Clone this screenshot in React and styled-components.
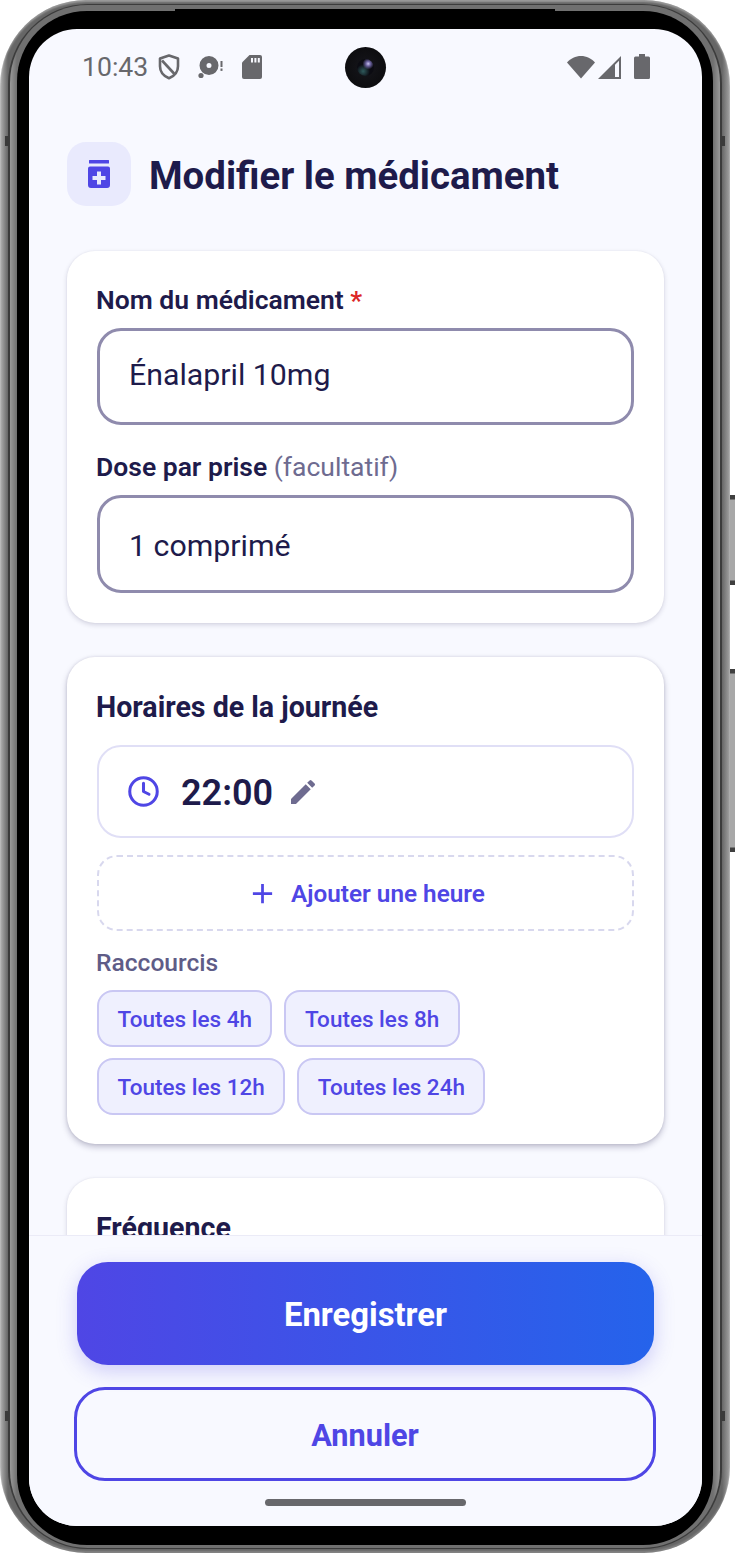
import React from "react";
import styled, { createGlobalStyle } from "styled-components";
import { Clock } from "lucide-react";
import { MdAdd, MdEdit } from "react-icons/md";

const INK = "#1e1b4b";
const INDIGO = "#4f46e5";
const STATUS_GREY = "#68686c";

const GlobalStyle = createGlobalStyle`
  html, body {
    margin: 0;
    background: #fff;
  }
  * {
    box-sizing: border-box;
  }
  body {
    font-family: Roboto, "Noto Sans", sans-serif;
    color: ${INK};
  }
`;

const Stage = styled.div`
  position: relative;
  width: 735px;
  height: 1553px;
  overflow: hidden;
`;

const SideKey = styled.div`
  position: absolute;
  left: 729px;
  top: ${(p) => p.$top}px;
  width: 6px;
  height: ${(p) => p.$height}px;
  background: linear-gradient(
    180deg,
    #3f3f3f 0,
    #3f3f3f 4px,
    #a8a8a8 5px,
    #a8a8a8 calc(100% - 5px),
    #3f3f3f calc(100% - 4px)
  );
`;

/* Little antenna cuts in the metal rim */
const RimCut = styled.div`
  position: absolute;
  left: ${(p) => p.$left}px;
  top: ${(p) => p.$top}px;
  width: 4px;
  height: 10px;
  background: #3a3a3a;
`;

const TopSeam = styled.div`
  position: absolute;
  left: 175px;
  top: 9px;
  width: 380px;
  height: 3px;
  background: #000;
`;

const Shell = styled.div`
  position: relative;
  width: 730px;
  height: 1553px;
  padding: 4px 8px 4px 8px;
  border-radius: 86px;
  background: linear-gradient(90deg, #b4b4b4 0, #666 8px, #666 calc(100% - 8px), #a4a4a4 100%);
  box-shadow: inset 0 2px 2px rgba(255, 255, 255, 0.35), inset 0 -2px 2px rgba(255, 255, 255, 0.2);
`;

const ShellLine = styled.div`
  height: 100%;
  padding: 1px 2px;
  border-radius: 80px;
  background: #3c3c3c;
`;

const ShellBand = styled.div`
  height: 100%;
  padding: 6px 7px 3px;
  border-radius: 78px;
  background: linear-gradient(90deg, #9a9a9a 0, #707070 7px, #707070 calc(100% - 7px), #9a9a9a 100%);
`;

const Bezel = styled.div`
  height: 100%;
  padding: 18px 11px 19px 12px;
  border-radius: 70px;
  background: #000;
`;

const Screen = styled.div`
  position: relative;
  display: flex;
  flex-direction: column;
  height: 100%;
  overflow: hidden;
  border-radius: 48px;
  background: #f8f9ff;
`;

const Scroll = styled.div`
  flex: 1;
  min-height: 0;
  overflow: hidden;
  padding: 0 38px;
`;

const StatusBar = styled.div`
  display: flex;
  align-items: center;
  height: 75px;
  margin: 0 -38px;
  padding: 0 52px 0 53px;
  color: ${STATUS_GREY};
`;

const Clocktime = styled.span`
  font-size: 26.6px;
  line-height: 75px;
  margin-right: 10px;
`;

const StatusIcon = styled.svg`
  display: block;
  flex: none;
  margin-right: ${(p) => p.$gap || 0}px;
`;

const StatusSpacer = styled.div`
  flex: 1;
`;

const Camera = styled.div`
  position: absolute;
  left: 316px;
  top: 18px;
  width: 41px;
  height: 41px;
  border-radius: 50%;
  background: radial-gradient(circle at 50% 50%, #16161c 0, #0e0e11 60%, #0a0a0c 100%);

  &::after {
    content: "";
    position: absolute;
    left: 12px;
    top: 12px;
    width: 17px;
    height: 17px;
    border-radius: 50%;
    background:
      radial-gradient(circle at 66% 28%, #c9c2ee 0, #6c63a0 14%, transparent 34%),
      radial-gradient(circle at 36% 72%, #2f5a5c 0, transparent 42%),
      #0b0b12;
  }
`;

const Header = styled.header`
  display: flex;
  align-items: center;
  gap: 18px;
  margin: 38px 0 45px;
`;

const HeaderTile = styled.div`
  display: flex;
  align-items: center;
  justify-content: center;
  width: 64px;
  height: 64px;
  border-radius: 19px;
  background: #e9eafd;
`;

const Title = styled.h1`
  margin: 0;
  padding-top: 3px;
  font-size: 38.4px;
  line-height: 44px;
  font-weight: 700;
  color: ${INK};
`;

const Card = styled.section`
  margin-bottom: 34px;
  padding: 34px 30px ${(p) => p.$bottom || 30}px;
  border-radius: 28px;
  background: #fff;
  box-shadow: ${(p) =>
    p.$raised
      ? "0 3px 6px rgba(30, 27, 75, 0.26), 0 0 3px rgba(30, 27, 75, 0.12)"
      : "0 2px 5px rgba(30, 27, 75, 0.16), 0 0 2px rgba(30, 27, 75, 0.07)"};
`;

const Label = styled.div`
  margin: ${(p) => p.$top || 0}px 0 0 -1px;
  font-size: 26.5px;
  line-height: 30px;
  font-weight: 600;
  color: ${INK};
`;

const Required = styled.span`
  color: #dc2626;
`;

const Optional = styled.span`
  font-weight: 400;
  color: #6e6b90;
`;

const TextField = styled.div`
  display: flex;
  align-items: center;
  height: ${(p) => p.$height}px;
  margin-top: 13px;
  padding: ${(p) => p.$drop || 0}px 29px ${(p) => p.$lift || 0}px;
  border: 3px solid #8f8bad;
  border-radius: 24px;
  font-size: 30.3px;
  color: ${INK};
`;

const CardTitle = styled.h2`
  margin: 0 0 0 -1px;
  font-size: 28.6px;
  line-height: 32px;
  font-weight: 700;
  color: ${INK};
`;

const TimeRow = styled.div`
  display: flex;
  align-items: center;
  height: 93px;
  margin-top: 22px;
  padding: 0 28px;
  border: 2px solid #e0dff6;
  border-radius: 24px;
`;

const TimeValue = styled.span`
  margin: 2px 14px 0 21px;
  font-size: 36px;
  font-weight: 600;
  color: ${INK};
`;

const AddRow = styled.div`
  display: flex;
  align-items: center;
  justify-content: center;
  gap: 12px;
  height: 76px;
  margin-top: 17px;
  border: 2px dashed #d8d8ee;
  border-radius: 20px;
  font-size: 24.3px;
  font-weight: 600;
  color: ${INDIGO};
`;

const ShortcutsLabel = styled.div`
  margin: 17px 0 0 -1px;
  padding-top: 1px;
  font-size: 24.6px;
  line-height: 28px;
  font-weight: 500;
  color: #5f5c87;
`;

const Chips = styled.div`
  display: flex;
  flex-wrap: wrap;
  gap: 11px 12px;
  margin-top: 13px;
  width: 420px;
`;

const Chip = styled.div`
  display: flex;
  align-items: center;
  height: 57px;
  padding: 1px 18.500px 0;
  border: 2px solid #c9c7f3;
  border-radius: 16px;
  background: #eff0fe;
  font-size: 22.5px;
  font-weight: 550;
  color: ${INDIGO};
`;

const Footer = styled.footer`
  flex: none;
  height: 291px;
  padding: 26px 46px 0 45px;
  border-top: 1px solid #ebebf7;
  background: #f8f9ff;
`;

const PrimaryButton = styled.button`
  display: block;
  width: 577px;
  height: 103px;
  margin: 0 0 22px 3px;
  padding: 2px 0 0;
  border: none;
  border-radius: 31px;
  background: linear-gradient(90deg, ${INDIGO}, #2563eb);
  box-shadow: 0 6px 20px rgba(79, 70, 229, 0.25);
  font: 700 32.8px Roboto, sans-serif;
  color: #fff;
`;

const SecondaryButton = styled.button`
  display: block;
  width: 582px;
  height: 94px;
  padding: 2px 0 0;
  border: 3px solid ${INDIGO};
  border-radius: 31px;
  background: transparent;
  font: 700 30.7px Roboto, sans-serif;
  color: ${INDIGO};
`;

const HomeBar = styled.div`
  position: absolute;
  left: 236px;
  bottom: 20px;
  width: 201px;
  height: 7px;
  border-radius: 4px;
  background: #68686c;
`;

function ShieldIcon() {
  return (
    <StatusIcon $gap={18} width="22" height="26" viewBox="0 0 22 26">
      <path
        d="M11 1.5 20 4.6v7.6c0 5.6-3.7 9.8-9 12-5.3-2.2-9-6.4-9-12V4.6z"
        fill="none"
        stroke="currentColor"
        strokeWidth="2.6"
        strokeLinejoin="round"
      />
      <path d="M4 6.500 16.500 20" stroke="currentColor" strokeWidth="2.6" />
    </StatusIcon>
  );
}

function DiscIcon() {
  return (
    <StatusIcon $gap={19} width="25" height="24" viewBox="0 0 25 24">
      <path
        fillRule="evenodd"
        d="M11 1a9.500 9.500 0 1 1 0 19 9.500 9.500 0 0 1 0-19zm0 7a2.500 2.500 0 1 0 0 5 2.500 2.500 0 0 0 0-5z"
        fill="currentColor"
      />
      <circle cx="3" cy="20.5" r="2.6" fill="currentColor" />
      <rect x="22.5" y="6" width="2" height="6" fill="currentColor" />
      <rect x="22.5" y="13.5" width="2" height="2.4" fill="currentColor" />
    </StatusIcon>
  );
}

function SdCardIcon() {
  return (
    <StatusIcon width="20" height="24" viewBox="0 0 20 24">
      <path
        d="M7.500 0H18a2 2 0 0 1 2 2v20a2 2 0 0 1-2 2H2a2 2 0 0 1-2-2V7.500z"
        fill="currentColor"
      />
      <rect x="9" y="3" width="2" height="4.5" fill="#f8f9ff" />
      <rect x="12.4" y="3" width="2" height="4.5" fill="#f8f9ff" />
      <rect x="15.8" y="3" width="2" height="4.5" fill="#f8f9ff" />
    </StatusIcon>
  );
}

function WifiIcon() {
  return (
    <StatusIcon $gap={3} width="28" height="24" viewBox="0 0 28 24">
      <path d="M14 23.500 0 7.600C3.600 3.400 8.600 1 14 1s10.400 2.400 14 6.600z" fill="currentColor" />
    </StatusIcon>
  );
}

function SignalIcon() {
  return (
    <StatusIcon $gap={13} width="23" height="24" viewBox="0 0 23 24">
      <path d="M23 1v23H0zM21 5.800 17 9.800V22h4z" fillRule="evenodd" fill="currentColor" />
    </StatusIcon>
  );
}

function BatteryIcon() {
  return (
    <StatusIcon width="16" height="25" viewBox="0 0 16 25">
      <path
        d="M5 0h6v2.500h3.500A1.500 1.500 0 0 1 16 4v19.500a1.500 1.500 0 0 1-1.500 1.500h-13A1.500 1.500 0 0 1 0 23.500V4a1.500 1.500 0 0 1 1.500-1.500H5z"
        fill="currentColor"
      />
    </StatusIcon>
  );
}

function PillBottleIcon() {
  return (
    <svg width="22" height="28" viewBox="0 0 22 28" aria-hidden="true">
      <rect x="1" y="0" width="20" height="3.5" rx="0.5" fill={INDIGO} />
      <path
        fillRule="evenodd"
        d="M2 6.500h18a2 2 0 0 1 2 2V25a3 3 0 0 1-3 3H3a3 3 0 0 1-3-3V8.500a2 2 0 0 1 2-2zm7 5v4.500H4.500v4H9v4.500h4V20h4.500v-4H13v-4.500z"
        fill={INDIGO}
      />
    </svg>
  );
}

const SHORTCUTS = ["Toutes les 4h", "Toutes les 8h", "Toutes les 12h", "Toutes les 24h"];

export default function App() {
  return (
    <Stage>
      <GlobalStyle />
      <SideKey $top={495} $height={90} />
      <SideKey $top={669} $height={183} />
      <Shell>
        <ShellLine>
          <ShellBand>
            <Bezel>
              <Screen>
                <Camera />
                <Scroll>
                  <StatusBar>
                    <Clocktime>10:43</Clocktime>
                    <ShieldIcon />
                    <DiscIcon />
                    <SdCardIcon />
                    <StatusSpacer />
                    <WifiIcon />
                    <SignalIcon />
                    <BatteryIcon />
                  </StatusBar>

                  <Header>
                    <HeaderTile>
                      <PillBottleIcon />
                    </HeaderTile>
                    <Title>Modifier le médicament</Title>
                  </Header>

                  <Card>
                    <Label>
                      Nom du médicament <Required>*</Required>
                    </Label>
                    <TextField $height={97} $lift={5}>
                      Énalapril 10mg
                    </TextField>
                    <Label $top={27}>
                      Dose par prise <Optional>(facultatif)</Optional>
                    </Label>
                    <TextField $height={98} $drop={2}>
                      1 comprimé
                    </TextField>
                  </Card>

                  <Card $raised $bottom={29}>
                    <CardTitle>Horaires de la journée</CardTitle>
                    <TimeRow>
                      <Clock size={33} color={INDIGO} strokeWidth={2.2} />
                      <TimeValue>22:00</TimeValue>
                      <MdEdit size={32} color="#6e6b90" />
                    </TimeRow>
                    <AddRow>
                      <MdAdd size={33} />
                      Ajouter une heure
                    </AddRow>
                    <ShortcutsLabel>Raccourcis</ShortcutsLabel>
                    <Chips>
                      {SHORTCUTS.map((label) => (
                        <Chip key={label}>{label}</Chip>
                      ))}
                    </Chips>
                  </Card>

                  <Card>
                    <CardTitle>Fréquence</CardTitle>
                  </Card>
                </Scroll>

                <Footer>
                  <PrimaryButton>Enregistrer</PrimaryButton>
                  <SecondaryButton>Annuler</SecondaryButton>
                </Footer>
                <HomeBar />
              </Screen>
            </Bezel>
          </ShellBand>
        </ShellLine>
        <TopSeam />
        <RimCut $left={5} $top={136} />
        <RimCut $left={721} $top={136} />
        <RimCut $left={5} $top={1411} />
        <RimCut $left={721} $top={1411} />
      </Shell>
    </Stage>
  );
}
